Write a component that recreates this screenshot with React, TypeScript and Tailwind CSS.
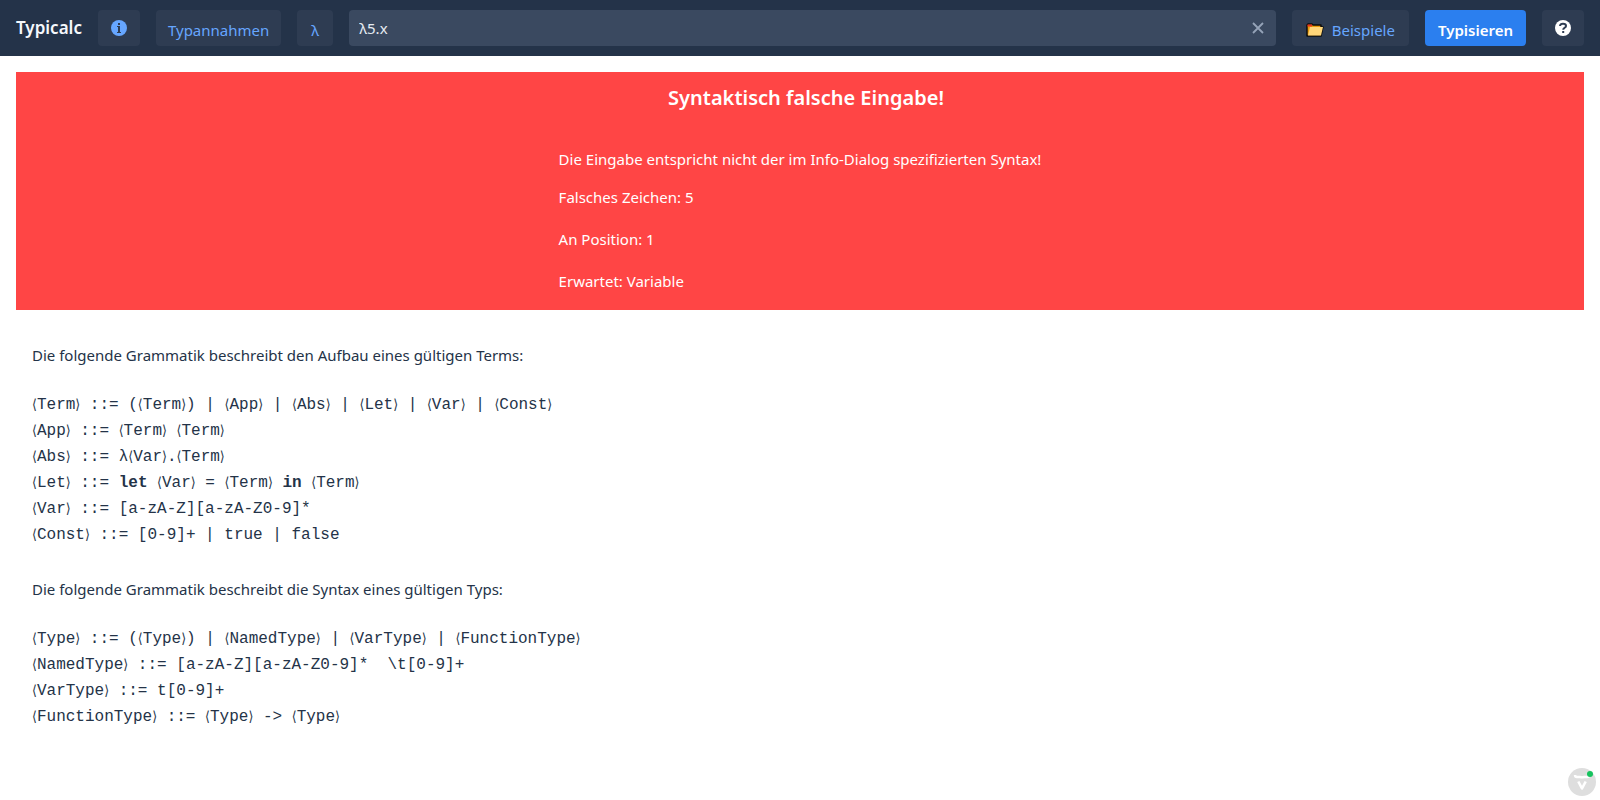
import { useState } from 'react';

const baseButton = 'flex h-9 shrink-0 items-center justify-center rounded bg-[#2e3c52] text-[#66a6ff]';

function InfoIcon() {
  return (
    <svg viewBox="0 0 16 16" className="h-4 w-4" aria-hidden="true">
      <circle cx="8" cy="8" r="8" fill="#66a6ff" />
      <path d="M7 3h2v2H7zM6 6h3v6h1v1H6v-1h1V7H6z" fill="#2e3c52" />
    </svg>
  );
}

function HelpIcon() {
  return (
    <svg viewBox="0 0 16 16" className="h-4 w-4" aria-hidden="true">
      <circle cx="8" cy="8" r="8" fill="#fff" />
      <path d="M5 6C5.200 4.400 6.400 3.700 8 3.700c1.800 0 3 .8 3 2.200C11 7.800 8.200 7.700 8.200 9.800" fill="none" stroke="#2e3c52" strokeWidth="2" />
      <path d="M7.200 11h2v2h-2z" fill="#2e3c52" />
    </svg>
  );
}

function FolderIcon() {
  return (
    <svg viewBox="0 0 18 14" className="h-[14px] w-[18px]" aria-hidden="true">
      <path d="M1 13V2l1-1h4l1 1h8v2h2l-2 9z" fill="#e89a0c" stroke="#0b0b0b" strokeWidth="1.400" strokeLinejoin="round" />
      <path d="M1.500 1.500h4.500v2h-4.500z" fill="#e8321c" />
      <path d="M4 4h13l-2 8.500H2z" fill="#ffd679" />
    </svg>
  );
}

function Grammar({ lines }: { lines: string[] }) {
  return (
    <div className="font-['Liberation_Mono',monospace] text-[16px] leading-[26px]">
      {lines.map((line) => (
        <div key={line} className="whitespace-pre-wrap">
          {line.split(/(⟨|⟩|\blet\b|\bin\b)/).map((part, i) => {
            if (part === '⟨' || part === '⟩') {
              return (
                <span key={i} className="font-['DejaVu_Sans_Condensed','DejaVu_Sans',sans-serif] text-[14px] leading-none">
                  {part}
                </span>
              );
            }
            return part === 'let' || part === 'in' ? <b key={i}>{part}</b> : part;
          })}
        </div>
      ))}
    </div>
  );
}

const termGrammar = [
  '⟨Term⟩ ::= (⟨Term⟩) | ⟨App⟩ | ⟨Abs⟩ | ⟨Let⟩ | ⟨Var⟩ | ⟨Const⟩',
  '⟨App⟩ ::= ⟨Term⟩ ⟨Term⟩',
  '⟨Abs⟩ ::= λ⟨Var⟩.⟨Term⟩',
  '⟨Let⟩ ::= let ⟨Var⟩ = ⟨Term⟩ in ⟨Term⟩',
  '⟨Var⟩ ::= [a-zA-Z][a-zA-Z0-9]*',
  '⟨Const⟩ ::= [0-9]+ | true | false',
];

const typeGrammar = [
  '⟨Type⟩ ::= (⟨Type⟩) | ⟨NamedType⟩ | ⟨VarType⟩ | ⟨FunctionType⟩',
  '⟨NamedType⟩ ::= [a-zA-Z][a-zA-Z0-9]*  \\t[0-9]+',
  '⟨VarType⟩ ::= t[0-9]+',
  '⟨FunctionType⟩ ::= ⟨Type⟩ -> ⟨Type⟩',
];

export default function App() {
  const [term, setTerm] = useState('λ5.x');
  return (
    <div className="min-h-screen bg-white font-['Noto_Sans',sans-serif] text-[15px] leading-[26px] text-[#243348]">
      <header className="flex h-14 items-center gap-4 bg-[#243349] px-4">
        <h1 className="text-[17px] font-semibold text-[#f5f8fc]">Typicalc</h1>
        <button type="button" aria-label="Info" className={`${baseButton} w-[42px]`}>
          <InfoIcon />
        </button>
        <button type="button" className={`${baseButton} px-3 pt-1`}>Typannahmen</button>
        <button type="button" className={`${baseButton} w-9 pt-1`}>λ</button>
        <div className="flex h-9 min-w-0 flex-1 items-center rounded bg-[#3a4960] px-[10px]">
          <input
            aria-label="Term"
            value={term}
            onChange={(e) => setTerm(e.target.value)}
            className="min-w-0 flex-1 bg-transparent text-[#e6ebf2] outline-none"
          />
          <button type="button" aria-label="Leeren" onClick={() => setTerm('')} className="text-[#95a3b8]">
            <svg viewBox="0 0 16 16" className="h-4 w-4" fill="none" stroke="currentColor" strokeWidth="1.800" aria-hidden="true">
              <path d="M3 3l10 10M13 3L3 13" />
            </svg>
          </button>
        </div>
        <button type="button" className={`${baseButton} gap-2 px-[14px] pt-1`}>
          <FolderIcon />
          Beispiele
        </button>
        <button type="button" className="flex h-9 shrink-0 items-center justify-center rounded bg-[#2b7fef] px-[13px] pt-1 font-semibold text-white">
          Typisieren
        </button>
        <button type="button" aria-label="Hilfe" className={`${baseButton} w-[42px]`}>
          <HelpIcon />
        </button>
      </header>

      <main className="p-4">
        <section role="alert" className="flex flex-col items-center bg-[#ff4545] pt-3 pb-4 text-white">
          <h2 className="pl-3 text-[20px] leading-7 font-semibold">Syntaktisch falsche Eingabe!</h2>
          <div className="pt-[34px]">
            <p className="pb-3">Die Eingabe entspricht nicht der im Info-Dialog spezifizierten Syntax!</p>
            <div className="flex flex-col gap-4">
              <p>Falsches Zeichen: 5</p>
              <p>An Position: 1</p>
              <p>Erwartet: Variable</p>
            </div>
          </div>
        </section>

        <section className="px-4 pt-8">
          <p className="pb-6">Die folgende Grammatik beschreibt den Aufbau eines gültigen Terms:</p>
          <Grammar lines={termGrammar} />
          <p className="pt-7 pb-6">Die folgende Grammatik beschreibt die Syntax eines gültigen Typs:</p>
          <Grammar lines={typeGrammar} />
        </section>
      </main>

      <button type="button" aria-label="Entwicklerwerkzeuge" className="fixed right-1 bottom-1 h-7 w-7">
        <svg viewBox="0 0 28 28" className="h-7 w-7" aria-hidden="true">
          <circle cx="14" cy="14" r="14" fill="#dedede" />
          <path d="M7 7q0 2 2 2h3q2 0 2 1.500Q14 9 16 9h3q2 0 2-2" fill="none" stroke="#fff" strokeWidth="2.400" />
          <path d="M10.300 13.500L14 20.500l3.700-7" fill="none" stroke="#fff" strokeWidth="2.600" strokeLinejoin="round" />
          <circle cx="22" cy="6" r="3" fill="#16c35e" />
        </svg>
      </button>
    </div>
  );
}
